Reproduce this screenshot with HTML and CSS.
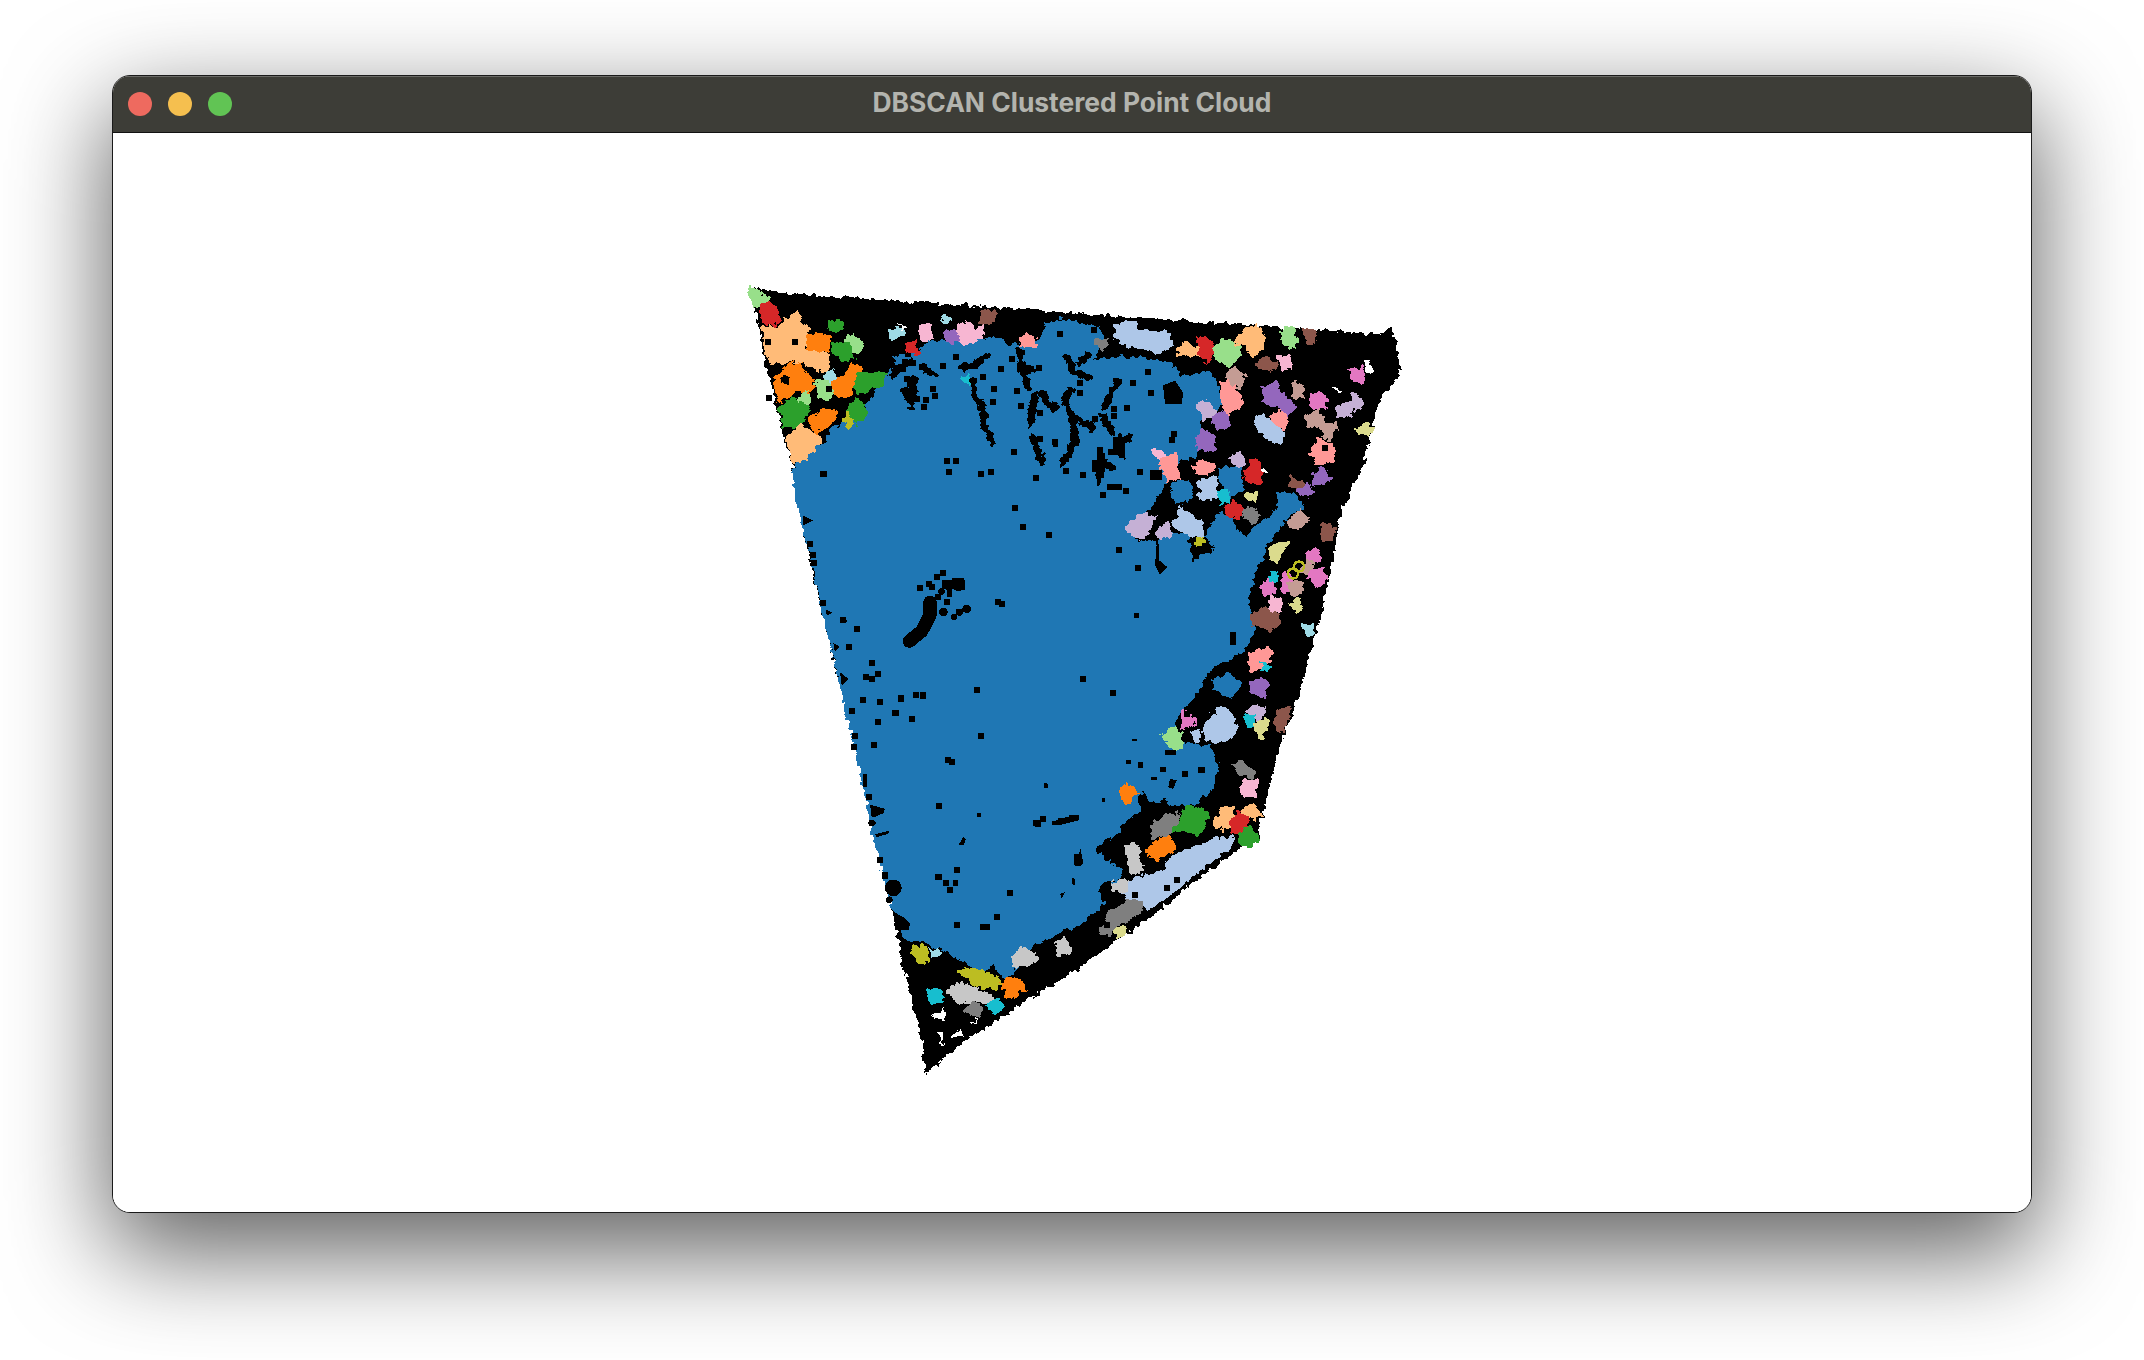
FILE: index.html
```html
<!DOCTYPE html>
<html lang="en">
<head>
<meta charset="utf-8">
<title>DBSCAN Clustered Point Cloud</title>
<link rel="stylesheet" href="styles.css">
</head>
<body>
<main class="window">
  <header class="titlebar">
    <div class="lights">
      <span class="light light-close"></span>
      <span class="light light-min"></span>
      <span class="light light-max"></span>
    </div>
    <h1 class="title">DBSCAN Clustered Point Cloud</h1>
    <div class="titlebar-end"></div>
  </header>
  <div class="canvas">
    <svg class="cloud" viewBox="113 133 1918 1078" xmlns="http://www.w3.org/2000/svg">
      <defs>
        <filter id="rough" x="-25%" y="-25%" width="150%" height="150%" color-interpolation-filters="sRGB">
          <feTurbulence type="fractalNoise" baseFrequency="0.16" numOctaves="2" seed="4" result="n"/>
          <feDisplacementMap in="SourceGraphic" in2="n" scale="9" xChannelSelector="R" yChannelSelector="G"/>
        </filter>
      </defs>
      <!-- noise points: hull -->
      <g class="rough-group">
      <polygon class="noise hull" points="748,288 770,293 1380,335 1390,327 1399,372 1377,402 1363,460 1340,510 1327,577 1320,613 1297,697 1280,740 1267,790 1257,827 1257,838 1240,847 1193,880 1157,910 1087,960 963,1040 927,1070 923,1040 903,957 893,905 877,847 857,750 843,695 825,617 805,533 793,465 768,367 758,313"/>
      </g>

      <!-- main cluster -->
      <g class="rough-group">
      <polygon class="blob c-blue" points="793,470 805,455 827,443 830,430 863,413 875,395 880,387 887,373 900,367 893,357 917,353 930,342 957,343 983,340 997,338 1007,345 1020,345 1040,342 1047,323 1063,320 1097,327 1102,333 1093,360 1117,358 1143,358 1170,363 1180,377 1210,373 1217,387 1223,403 1200,417 1200,437 1195,457 1178,460 1160,470 1167,480 1150,507 1130,527 1135,540 1158,545 1160,535 1187,535 1190,552 1193,566 1200,556 1217,550 1213,545 1207,535 1220,513 1233,520 1237,533 1247,537 1257,527 1277,510 1277,493 1293,493 1302,507 1290,513 1277,530 1263,547 1263,553 1253,573 1247,600 1250,617 1253,633 1243,650 1223,660 1207,670 1202,683 1193,697 1180,710 1170,733 1180,743 1210,747 1217,767 1212,777 1213,787 1193,803 1170,803 1167,797 1150,800 1143,790 1137,797 1140,810 1120,823 1117,833 1093,847 1103,860 1122,870 1120,877 1097,883 1103,903 1080,923 1060,930 1050,937 1033,943 1017,967 1007,977 993,963 983,970 960,957 923,940 903,937 907,923 893,908 877,847 857,750 843,695 837,667 825,617 817,577 805,533"/>
      </g>

      <!-- noise inside the main cluster -->
      <g class="wiggles rough-group">
        <polyline points="973,380 973,393 983,407 983,423 992,442"/>
        <polyline points="963,367 975,365 987,355"/>
        <polyline points="1020,350 1022,370 1028,387"/>
        <polyline points="1022,370 1033,368"/>
        <polyline points="1035,395 1030,423"/>
        <polyline points="1042,392 1047,403 1055,407"/>
        <polyline points="1070,390 1065,400 1073,420 1075,440 1063,463"/>
        <polyline points="1075,417 1093,427"/>
        <polyline points="1033,437 1042,462"/>
        <polyline points="1067,357 1073,370 1088,377"/>
        <polyline points="1118,380 1105,405"/>
        <polyline points="1102,415 1112,430"/>
        <polyline points="1120,437 1122,455"/>
        <polyline points="1120,440 1130,438"/>
        <polyline points="1100,450 1100,473 1098,480"/>
        <polyline points="1103,463 1113,467"/>
        <polyline points="1087,355 1080,363"/>
        <polyline points="915,377 912,393"/>
        <polyline points="905,390 912,405"/>
        <polyline points="923,367 935,375"/>
        <polyline points="892,375 910,360"/>
      </g>
      <polygon class="noise" points="1163,385 1175,380 1183,392 1182,403 1165,403"/>

      <g class="dots-layer" transform="translate(900 320) scale(.3333)">
        <path class="noise" d="M159 101h18v18h-18zM121 129h18v18h-18zM56 131h18v18h-18zM91 196h18v18h-18zM96 217h18v18h-18zM41 227h18v18h-18zM69 231h18v18h-18zM63 251h18v18h-18zM241 161h18v18h-18zM294 138h18v18h-18zM328 108h18v18h-18zM273 196h18v18h-18zM271 236h18v18h-18zM343 204h18v18h-18zM353 249h18v18h-18zM411 268h18v18h-18zM408 133h18v18h-18zM333 387h18v18h-18zM133 413h18v18h-18zM160 413h18v18h-18zM139 446h18v18h-18zM264 447h18v18h-18zM233 451h18v18h-18zM400 463h18v18h-18zM455 356h18v18h-18zM411 346h18v18h-18zM539 456h18v18h-18zM488 443h18v18h-18zM531 179h18v18h-18zM531 208h18v18h-18zM575 287h18v18h-18zM633 256h18v18h-18zM671 254h18v18h-18zM633 279h18v18h-18zM623 386h18v18h-18zM712 445h18v18h-18zM736 146h18v18h-18zM690 178h18v18h-18zM744 208h18v18h-18zM813 331h18v18h-18zM806 351h18v18h-18zM669 503h18v18h-18zM601 516h18v18h-18zM335 554h18v18h-18zM811 479h18v18h-18zM574 19h18v18h-18zM471 31h18v18h-18zM16 91h18v18h-18zM6 116h18v18h-18zM31 118h18v18h-18zM1 138h18v18h-18zM11 166h18v18h-18zM21 181h18v18h-18z"/>
        <path class="noise" d="M590 380h20v40h-20zM575 420h30v35h-30zM640 350h35v55h-35zM620 490h45v18h-45zM750 450h35v30h-35zM460 360h15v20h-15z"/>
      </g>
      <g class="dots-layer" transform="translate(790 460) scale(.3333)">
        <path class="noise" d="M93 32h18v18h-18zM469 26h18v18h-18zM563 31h18v18h-18zM594 27h18v18h-18zM665 133h18v18h-18zM690 192h18v18h-18zM50 242h18v18h-18zM60 274h18v18h-18zM62 300h18v18h-18zM90 420h18v18h-18zM169 551h18v18h-18zM237 599h18v18h-18zM220 641h18v18h-18zM256 633h18v18h-18zM238 646h18v18h-18zM210 709h18v18h-18zM324 705h18v18h-18zM369 696h18v18h-18zM389 697h18v18h-18zM552 680h18v18h-18zM431 340h18v18h-18zM451 329h18v18h-18zM381 373h18v18h-18zM418 371h18v18h-18zM408 362h18v18h-18zM191 496h18v18h-18zM151 469h18v18h-18zM616 416h18v18h-18zM626 421h18v18h-18zM461 416h18v18h-18zM436 401h18v18h-18zM505 360h20v30h-20zM485 352h36v18h-36zM455 360h30v25h-30zM470 390h15v20h-15z"/>
        <path class="noise" d="M38 165L70 180L40 195zM130 548L148 558L135 575zM150 635L175 655L155 675zM108 447L127 457L110 465zM150 472L175 482L158 488z"/>
        <polyline class="streak" points="358,542 395,512 420,465 420,425"/>
        <circle class="noise" cx="460" cy="455" r="13"/><circle class="noise" cx="508" cy="455" r="11"/><circle class="noise" cx="530" cy="445" r="13"/><circle class="noise" cx="492" cy="470" r="9"/><circle class="noise" cx="455" cy="393" r="10"/><circle class="noise" cx="505" cy="372" r="20"/><circle class="noise" cx="478" cy="378" r="12"/>
      </g>
      <g class="dots-layer" transform="translate(820 690) scale(.3333)">
        <path class="noise" d="M119 20h18v18h-18zM172 27h18v18h-18zM234 16h18v18h-18zM279 6h18v18h-18zM299 6h18v18h-18zM216 58h18v18h-18zM226 60h10v16h-10zM165 86h18v18h-18zM266 76h18v18h-18zM86 54h18v18h-18zM96 128h18v18h-18zM94 160h18v18h-18zM154 154h18v18h-18zM473 127h18v18h-18zM376 201h18v18h-18zM388 205h18v18h-18zM347 337h18v18h-18zM138 311h18v18h-18zM172 499h18v18h-18zM403 529h18v18h-18zM369 568h18v18h-18zM382 589h18v18h-18zM521 671h18v18h-18zM402 696h18v18h-18zM562 598h18v18h-18zM659 376h18v18h-18zM646 391h18v18h-18zM672 278h10v16h-10zM472 368h10v12h-10zM130 250h12v40h-12zM345 550h22v20h-22zM398 570h16v16h-16zM762 490h18v35h-18zM186 545h18v20h-18zM480 700h30v20h-30z"/>
        <path class="noise" d="M150 342L195 355L190 368L165 380L155 380zM150 390L170 395L160 408zM165 432L190 425L210 420L205 430L170 440zM415 465L430 440L438 445L432 463zM720 385L770 372L775 390L715 405L695 395zM755 560L765 565L765 585L755 580zM720 610L735 605L725 625zM222 665L250 680L270 700L265 720L225 720z"/>
        <circle class="noise" cx="220" cy="592" r="25"/><circle class="noise" cx="208" cy="628" r="10"/><circle class="noise" cx="155" cy="397" r="10"/>
      </g>
      <g class="dots-layer" transform="translate(1030 500) scale(.3333)">
        <path class="noise" d="M47 94h18v18h-18zM257 141h18v18h-18zM316 193h18v18h-18zM151 528h18v18h-18zM240 569h18v18h-18zM312 338h14v14h-14zM600 395h18v40h-18zM306 715h14v6h-14zM405 748h32v16h-32zM288 780h14v10h-14zM325 785h15v18h-15zM390 800h18v15h-18zM456 813h18v18h-18zM505 800h20v18h-20zM44 850h10v12h-10zM216 892h8v12h-8zM362 830h20v10h-20zM10 960h20v16h-20zM32 946h14v16h-14zM65 962h30v12h-30zM85 952h30v12h-30zM118 945h30v15h-30z"/>
        <path class="noise" d="M380 130L388 130L388 180L412 200L390 222L375 195zM135 1095L152 1045L160 1090L150 1097zM420 835L440 840L430 865L415 860z"/>
      </g>

      <!-- clusters around the rim -->
      <g class="rough-group">
      <polygon class="blob c-lgreen" points="748,288 758,292 769,298 768,302 755,306"/>
      <polygon class="blob c-red" points="760,307 770,302 777,308 780,320 772,325 763,320"/>
      <polygon class="blob c-lorange" points="763,327 777,328 797,313 805,325 808,338 800,348 827,353 828,372 797,360 773,363 767,352"/>
      <polygon class="blob c-orange" points="808,337 820,333 830,337 828,348 817,352 807,347"/>
      <polygon class="blob c-green" points="830,322 840,319 843,325 837,331 829,328"/>
      <polygon class="blob c-lgreen" points="847,338 855,336 863,345 858,352 850,348"/>
      <polygon class="blob c-green" points="832,345 837,341 852,345 853,357 843,360 833,350"/>
      <polygon class="blob c-lcyan" points="825,373 833,370 835,382 827,380"/>
      <polygon class="blob c-orange" points="775,377 790,365 798,363 813,383 810,393 797,390 780,400 775,387"/>
      <circle class="noise" cx="785" cy="380" r="4"/>
      <polygon class="blob c-orange" points="830,383 845,377 850,365 862,367 858,377 848,397 833,393"/>
      <polygon class="blob c-green" points="855,378 863,373 885,373 880,385 870,388 858,392"/>
      <polygon class="blob c-lgreen" points="816,382 827,380 833,393 827,400 818,393"/>
      <polygon class="blob c-lgreen" points="798,397 808,393 808,402 800,402"/>
      <polygon class="blob c-green" points="780,407 790,398 810,407 800,423 785,427"/>
      <polygon class="blob c-green" points="848,407 857,398 867,413 857,423 848,413"/>
      <polygon class="blob c-olive" points="843,418 848,413 853,420 848,427"/>
      <polygon class="blob c-orange" points="810,418 827,410 838,413 830,423 815,432"/>
      <polygon class="blob c-lorange" points="787,437 800,425 822,440 810,452 803,460 793,462"/>
      <polygon class="blob c-lcyan" points="890,332 897,327 903,332 893,340"/>
      <polygon class="blob c-lpink" points="918,327 930,323 932,338 923,340"/>
      <polygon class="blob c-red" points="905,345 915,338 917,353 907,350"/>
      <polygon class="blob c-lcyan" points="942,315 953,318 947,322"/>
      <polygon class="blob c-purple" points="945,332 955,329 960,342 947,340"/>
      <polygon class="blob c-lpink" points="957,327 968,322 975,332 983,325 982,335 973,342 960,343"/>
      <polygon class="blob c-brown" points="983,311 996,312 993,320 980,322"/>
      <polygon class="blob c-salmon" points="1020,338 1027,336 1035,336 1035,345 1025,345"/>
      <polygon class="blob c-cyan" points="963,377 968,375 968,383"/>
      <polygon class="blob c-gray" points="1095,340 1108,340 1103,350"/>
      <polygon class="blob c-lblue" points="1117,325 1133,322 1140,330 1170,333 1173,343 1160,353 1147,347 1130,345 1115,337"/>
      <polygon class="blob c-lorange" points="1178,347 1187,343 1198,348 1200,355 1187,353 1178,355"/>
      <polygon class="blob c-red" points="1197,338 1205,336 1215,345 1208,362 1200,353"/>
      <polygon class="blob c-lgreen" points="1215,350 1223,340 1238,345 1240,355 1228,365 1217,358"/>
      <polygon class="blob c-lorange" points="1237,335 1257,325 1265,337 1263,347 1253,355 1247,345 1237,342"/>
      <polygon class="blob c-lgreen" points="1282,328 1293,328 1298,340 1290,348 1282,338"/>
      <polygon class="blob c-brown" points="1303,330 1315,330 1315,343 1308,342"/>
      <polygon class="blob c-brown" points="1257,363 1267,357 1275,363 1272,372 1263,368"/>
      <polygon class="blob c-lpink" points="1278,357 1287,357 1291,367 1283,368"/>
      <polygon class="blob c-tan" points="1227,373 1233,368 1245,377 1240,387 1228,383"/>
      <polygon class="blob c-salmon" points="1222,383 1230,383 1242,400 1238,408 1227,412 1222,395"/>
      <polygon class="blob c-purple" points="1263,387 1275,382 1283,397 1295,406 1287,415 1277,407 1265,400"/>
      <polygon class="blob c-tan" points="1293,383 1302,385 1303,397 1293,395"/>
      <polygon class="blob c-pink" points="1310,395 1318,392 1325,398 1326,407 1312,407"/>
      <polygon class="blob c-lav" points="1352,392 1358,395 1363,403 1355,410 1351,400"/>
      <polygon class="blob c-lav" points="1337,405 1350,403 1350,413 1338,416"/>
      <polygon class="blob c-pink" points="1350,370 1363,368 1364,380 1357,382"/>
      <polygon class="blob c-salmon" points="1273,415 1282,412 1288,420 1283,427 1275,423"/>
      <polygon class="blob c-tan" points="1305,418 1317,410 1325,422 1317,428 1308,423"/>
      <polygon class="blob c-tan" points="1323,425 1336,423 1333,438 1323,435"/>
      <polygon class="blob c-khaki" points="1357,430 1365,423 1372,428 1368,435 1360,434"/>
      <polygon class="blob c-lblue" points="1253,420 1263,415 1283,432 1282,443 1267,440"/>
      <polygon class="blob c-lav" points="1198,405 1208,401 1215,412 1205,418"/>
      <polygon class="blob c-purple" points="1212,415 1225,412 1230,425 1217,428"/>
      <polygon class="blob c-purple" points="1197,440 1203,430 1215,438 1213,450 1200,448"/>
      <polygon class="blob c-salmon" points="1312,450 1317,438 1332,443 1335,460 1317,465"/>
      <polygon class="blob c-lpink" points="1152,448 1163,453 1165,460 1158,458"/>
      <polygon class="blob c-salmon" points="1163,458 1175,455 1178,477 1168,480 1162,467"/>
      <polygon class="blob c-salmon" points="1193,465 1203,460 1214,467 1207,473 1197,473"/>
      <polygon class="blob c-lav" points="1230,458 1240,453 1245,460 1237,465"/>
      <polygon class="blob c-red" points="1245,473 1252,460 1258,462 1262,483 1247,482"/>
      <polygon class="blob c-blue" points="1220,468 1240,467 1242,487 1230,497 1220,477"/>
      <polygon class="blob c-blue" points="1170,488 1182,478 1192,488 1188,500 1177,502"/>
      <polygon class="blob c-lblue" points="1200,480 1215,477 1217,498 1200,498"/>
      <polygon class="blob c-cyan" points="1218,493 1227,490 1228,502 1222,502"/>
      <polygon class="blob c-khaki" points="1247,493 1256,493 1255,500 1248,500"/>
      <polygon class="blob c-red" points="1227,507 1233,502 1242,508 1237,518 1228,515"/>
      <polygon class="blob c-gray" points="1243,510 1252,507 1258,515 1252,522 1245,518"/>
      <polygon class="blob c-brown" points="1290,477 1302,483 1298,487 1290,485"/>
      <polygon class="blob c-purple" points="1313,472 1323,468 1329,480 1313,483"/>
      <polygon class="blob c-purple" points="1298,490 1308,483 1313,492 1303,497"/>
      <polygon class="blob c-tan" points="1287,522 1300,510 1308,520 1298,528"/>
      <polygon class="blob c-brown" points="1320,528 1325,523 1335,527 1332,538 1323,538"/>
      <polygon class="blob c-lav" points="1128,527 1140,513 1155,517 1143,537 1133,535"/>
      <polygon class="blob c-lav" points="1157,532 1168,523 1172,535 1160,538"/>
      <polygon class="blob c-lblue" points="1173,525 1182,507 1200,522 1203,538 1187,533"/>
      <polygon class="blob c-olive" points="1195,542 1202,537 1203,545 1197,545"/>
      <polygon class="blob c-khaki" points="1270,547 1278,543 1287,543 1277,560 1270,558"/>
      <polygon class="blob c-pink" points="1307,553 1317,548 1320,560 1310,562"/>
      <polygon class="blob c-tan" points="1300,570 1310,560 1313,567 1307,573"/>
      <polygon class="blob c-pink" points="1310,573 1322,568 1327,577 1320,585 1312,582"/>
      <polygon class="blob c-pink" points="1262,585 1270,577 1275,592 1265,595"/>
      <polygon class="blob c-pink" points="1282,578 1287,572 1293,582 1283,592"/>
      <polygon class="blob c-cyan" points="1271,573 1276,573 1277,581 1272,581"/>
      <polygon class="blob c-tan" points="1288,583 1300,582 1302,593 1292,595"/>
      <polygon class="blob c-khaki" points="1290,605 1298,598 1303,610 1295,610"/>
      <polygon class="blob c-lpink" points="1270,598 1280,597 1282,610 1272,610"/>
      <polygon class="blob c-brown" points="1252,615 1265,608 1277,615 1278,623 1270,630 1252,623"/>
      <polygon class="blob c-lcyan" points="1303,625 1313,624 1312,633 1307,633"/>
      <polygon class="blob c-salmon" points="1252,652 1270,649 1268,662 1253,671 1248,660"/>
      <polygon class="blob c-cyan" points="1262,663 1265,663 1266,668 1270,668 1262,670"/>
      <polygon class="blob c-blue" points="1213,680 1230,674 1240,683 1230,697 1215,687"/>
      <polygon class="blob c-purple" points="1250,682 1260,678 1268,683 1263,697 1253,693"/>
      <polygon class="blob c-lav" points="1248,712 1258,705 1264,712 1260,718 1252,717"/>
      <polygon class="blob c-brown" points="1275,717 1280,708 1290,708 1283,730 1277,728"/>
      <polygon class="blob c-cyan" points="1245,715 1253,717 1253,727 1247,727"/>
      <polygon class="blob c-khaki" points="1255,722 1267,720 1268,728 1262,737 1255,728"/>
      <polygon class="blob c-pink" points="1182,710 1190,713 1195,722 1183,727"/>
      <polygon class="blob c-lblue" points="1203,728 1220,707 1230,713 1237,727 1227,740 1207,740"/>
      <polygon class="blob c-lblue" points="1193,732 1198,730 1199,740 1195,741"/>
      <polygon class="blob c-lgreen" points="1163,735 1172,728 1180,733 1180,747 1173,748"/>
      <polygon class="blob c-gray" points="1232,765 1243,762 1253,770 1252,777 1240,772"/>
      <polygon class="blob c-lpink" points="1243,780 1257,780 1255,797 1240,793"/>
      <polygon class="blob c-orange" points="1120,787 1127,783 1137,793 1127,803 1122,798"/>
      <polygon class="blob c-gray" points="1152,825 1167,815 1178,813 1173,830 1155,837"/>
      <polygon class="blob c-green" points="1175,830 1187,805 1208,813 1202,832"/>
      <polygon class="blob c-lorange" points="1215,825 1223,807 1233,808 1232,820 1223,830"/>
      <polygon class="blob c-lorange" points="1243,812 1252,802 1260,813 1255,818"/>
      <polygon class="blob c-red" points="1230,823 1237,813 1248,817 1245,833 1233,833"/>
      <polygon class="blob c-green" points="1240,838 1248,825 1257,838 1250,846 1242,845"/>
      <polygon class="blob c-lblue" points="1123,887 1137,877 1163,872 1173,855 1207,843 1217,838 1233,838 1230,847 1207,863 1187,880 1167,897 1148,908 1140,900 1128,900"/>
      <polygon class="blob c-orange" points="1146,852 1158,840 1168,835 1176,847 1157,859"/>
      <polygon class="blob c-lgray" points="1126,848 1132,843 1138,850 1142,870 1132,873"/>
      <polygon class="blob c-lgray" points="1112,882 1125,880 1125,890 1115,890"/>
      <polygon class="blob c-gray" points="1100,930 1110,913 1130,900 1142,902 1140,912 1120,923 1105,935"/>
      <polygon class="blob c-khaki" points="1115,930 1123,927 1126,933 1118,937"/>
      <polygon class="blob c-olive" points="912,947 923,945 928,960 918,962"/>
      <polygon class="blob c-lcyan" points="930,950 938,950 937,956 932,955"/>
      <polygon class="blob c-lgray" points="1012,957 1022,947 1038,958 1030,965 1015,965"/>
      <polygon class="blob c-lgray" points="1057,942 1065,939 1071,950 1058,955"/>
      <polygon class="blob c-olive" points="960,972 972,968 992,975 1000,982 995,987 977,985"/>
      <polygon class="blob c-orange" points="1002,982 1017,978 1025,988 1008,997"/>
      <polygon class="blob c-lgray" points="948,990 962,982 993,997 992,1003 977,1000 957,1002"/>
      <polygon class="blob c-gray" points="965,1010 972,1002 982,1008 978,1015"/>
      <polygon class="blob c-cyan" points="928,990 940,990 942,1000 930,1003"/>
      <polygon class="blob c-cyan" points="988,1005 997,998 1002,1007 995,1012"/>
      </g>

      <!-- noise points drawn over clusters -->
      <path class="noise" d="M765 338h6v6h-6zM792 338h6v6h-6zM766 394h6v6h-6zM795 390h6v6h-6zM826 385h6v6h-6zM786 426h6v6h-6zM820 470h6v6h-6zM1322 444h6v6h-6zM1184 710h6v6h-6zM1132 891h6v6h-6zM1164 884h6v6h-6zM1174 876h6v6h-6zM1104 921h6v6h-6z"/>
      <circle class="ring" cx="1299" cy="566" r="5"/>
      <circle class="ring" cx="1293" cy="573" r="5"/>

      <!-- gaps in the cloud -->
      <g class="gaps rough-group">
        <polygon points="933,1015 945,1008 945,1023"/>
        <polygon points="938,1030 943,1032 943,1047"/>
        <polygon points="950,1037 960,1028 962,1035"/>
        <polygon points="970,1023 978,1017 973,1025"/>
        <polygon points="1362,360 1370,360 1372,375 1367,370"/>
        <polygon points="1333,387 1340,389 1338,393"/>
        <polygon points="1260,467 1267,472 1260,473"/>
        <polygon points="897,320 907,328 903,331"/>
      </g>
    </svg>
  </div>
</main>
</body>
</html>
```

FILE: styles.css
```css
* { box-sizing: border-box; }

html, body {
  margin: 0;
  height: 100%;
  background: #fff;
}

body {
  padding: 75px 112px 0;
  overflow: hidden;
}

.window {
  width: 1920px;
  height: 1138px;
  display: flex;
  flex-direction: column;
  background: #fff;
  border: 1px solid #1a1a1a;
  border-radius: 18px;
  overflow: hidden;
  box-shadow: 0 36px 100px 4px rgba(0, 0, 0, 0.62);
}

.titlebar {
  height: 57px;
  flex: none;
  display: grid;
  grid-template-columns: 1fr auto 1fr;
  align-items: center;
  padding: 0 15px;
  background: #3d3d37;
  border-bottom: 1px solid #111;
  box-shadow: inset 0 1px 0 #6a6a66;
}

.lights {
  display: flex;
  gap: 16px;
}

.light {
  width: 24px;
  height: 24px;
  border-radius: 50%;
}

.light-close { background: #ee6a5f; }
.light-min { background: #f5bf4f; }
.light-max { background: #61c454; }

.title {
  margin: -2px 0 0;
  font: 700 26.4px/1.2 "Inter", "Liberation Sans", sans-serif;
  color: #b3b4ae;
}

.canvas {
  flex: 1;
  min-height: 0;
  background: #fff;
}

.cloud {
  display: block;
  width: 100%;
  height: 100%;
  shape-rendering: crispEdges;
}

.rough-group { filter: url(#rough); }

.noise { fill: #000; }

.hull {
  stroke: #000;
  stroke-width: 3;
}

.wiggles polyline {
  fill: none;
  stroke: #000;
  stroke-width: 7;
  stroke-linejoin: round;
  stroke-linecap: round;
}

.streak {
  fill: none;
  stroke: #000;
  stroke-width: 40;
  stroke-linecap: round;
  stroke-linejoin: round;
}

.ring {
  fill: none;
  stroke: #bcbd22;
  stroke-width: 2.5;
}

.blob {
  stroke-width: 3;
  stroke-linejoin: round;
}

.gaps polygon { fill: #fff; }

.c-blue { fill: #1f77b4; stroke: #1f77b4; }
.c-lblue { fill: #aec7e8; stroke: #aec7e8; }
.c-orange { fill: #ff7f0e; stroke: #ff7f0e; }
.c-lorange { fill: #ffbb78; stroke: #ffbb78; }
.c-green { fill: #2ca02c; stroke: #2ca02c; }
.c-lgreen { fill: #98df8a; stroke: #98df8a; }
.c-red { fill: #d62728; stroke: #d62728; }
.c-salmon { fill: #ff9896; stroke: #ff9896; }
.c-purple { fill: #9467bd; stroke: #9467bd; }
.c-lav { fill: #c5b0d5; stroke: #c5b0d5; }
.c-brown { fill: #8c564b; stroke: #8c564b; }
.c-tan { fill: #c49c94; stroke: #c49c94; }
.c-pink { fill: #e377c2; stroke: #e377c2; }
.c-lpink { fill: #f7b6d2; stroke: #f7b6d2; }
.c-gray { fill: #7f7f7f; stroke: #7f7f7f; }
.c-lgray { fill: #c7c7c7; stroke: #c7c7c7; }
.c-olive { fill: #bcbd22; stroke: #bcbd22; }
.c-khaki { fill: #dbdb8d; stroke: #dbdb8d; }
.c-cyan { fill: #17becf; stroke: #17becf; }
.c-lcyan { fill: #9edae5; stroke: #9edae5; }
```
